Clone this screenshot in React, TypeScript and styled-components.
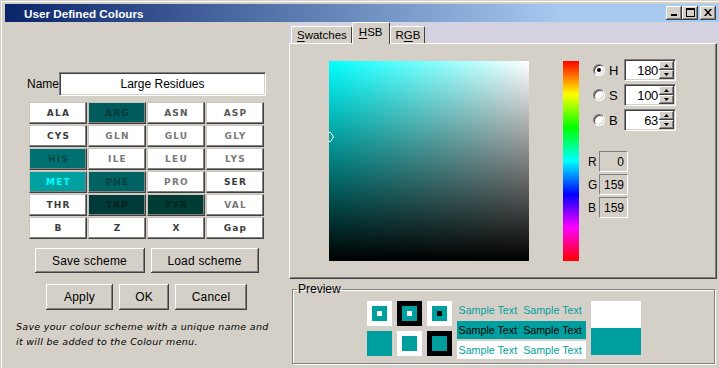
import React from 'react'
import styled, { createGlobalStyle } from 'styled-components'

const TEAL = '#009f9f'

const GlobalStyle = createGlobalStyle`
  html, body {
    margin: 0;
    padding: 0;
    background: #d4d0c8;
  }
  body {
    width: 719px;
    height: 368px;
    overflow: hidden;
    font-family: 'Liberation Sans', Arial, sans-serif;
  }
`

const residues = [
  { name: 'ALA', bg: '#fff', fg: '#3c3c3c' },
  { name: 'ARG', bg: '#005c5c', fg: '#003a3a' },
  { name: 'ASN', bg: '#fff', fg: '#5a5a5a' },
  { name: 'ASP', bg: '#fff', fg: '#5a5a5a' },
  { name: 'CYS', bg: '#fff', fg: '#3c3c3c' },
  { name: 'GLN', bg: '#fff', fg: '#7a7a7a' },
  { name: 'GLU', bg: '#fff', fg: '#7a7a7a' },
  { name: 'GLY', bg: '#fff', fg: '#7a7a7a' },
  { name: 'HIS', bg: '#007070', fg: '#004848' },
  { name: 'ILE', bg: '#fff', fg: '#7a7a7a' },
  { name: 'LEU', bg: '#fff', fg: '#7a7a7a' },
  { name: 'LYS', bg: '#fff', fg: '#7a7a7a' },
  { name: 'MET', bg: '#00a0a0', fg: '#00ffff' },
  { name: 'PHE', bg: '#006262', fg: '#003e3e' },
  { name: 'PRO', bg: '#fff', fg: '#7a7a7a' },
  { name: 'SER', bg: '#fff', fg: '#3c3c3c' },
  { name: 'THR', bg: '#fff', fg: '#3c3c3c' },
  { name: 'TRP', bg: '#003a3a', fg: '#002020' },
  { name: 'TYR', bg: '#003c34', fg: '#00241e' },
  { name: 'VAL', bg: '#fff', fg: '#7a7a7a' },
  { name: 'B', bg: '#fff', fg: '#3c3c3c' },
  { name: 'Z', bg: '#fff', fg: '#3c3c3c' },
  { name: 'X', bg: '#fff', fg: '#3c3c3c' },
  { name: 'Gap', bg: '#fff', fg: '#3c3c3c' },
]

function App() {
  return (
    <>
      <GlobalStyle />
      <Window>
        <TitleBar>
          <Title>User Defined Colours</Title>
          <CaptionButtons>
            <CaptionButton>
              <svg width="8" height="7">
                <rect x="1" y="5" width="6" height="2" fill="#000" />
              </svg>
            </CaptionButton>
            <CaptionButton>
              <svg width="9" height="9">
                <rect x="0.5" y="0.5" width="8" height="8" fill="none" stroke="#000" />
                <rect x="0" y="1" width="9" height="1" fill="#000" />
              </svg>
            </CaptionButton>
            <CaptionButton $gap>
              <svg width="8" height="7">
                <path d="M0 0h2l2 2.4L6 0h2L5 3.5 8 7H6L4 4.6 2 7H0l3-3.5z" fill="#000" />
              </svg>
            </CaptionButton>
          </CaptionButtons>
        </TitleBar>

        <Body>
          <LeftPanel>
            <NameRow>
              <NameLabel>Name</NameLabel>
              <NameField>Large Residues</NameField>
            </NameRow>
            <CellGrid>
              {residues.map((r) => (
                <Cell key={r.name} $bg={r.bg} $fg={r.fg}>
                  {r.name}
                </Cell>
              ))}
            </CellGrid>
            <ButtonRow $top={9}>
              <Button $w={110} $h={25}>Save scheme</Button>
              <Button $w={108} $h={25}>Load scheme</Button>
            </ButtonRow>
            <ButtonRow $top={11}>
              <Button $w={67} $h={26}>Apply</Button>
              <Button $w={50} $h={26}>OK</Button>
              <Button $w={72} $h={26}>Cancel</Button>
            </ButtonRow>
            <Note>
              Save your colour scheme with a unique name and
              <br />
              it will be added to the Colour menu.
            </Note>
          </LeftPanel>

          <RightPanel>
            <TabStrip>
              <Tab>
                <u>S</u>watches
              </Tab>
              <Tab $active>
                <u>H</u>SB
              </Tab>
              <Tab>
                R<u>G</u>B
              </Tab>
            </TabStrip>
            <TabPanel>
              <ColorSquare>
                <Marker width="6" height="10">
                  <path d="M0.5 0.5H2.5L5.5 5L2.5 9.5H0.5" fill="none" stroke="#fff" />
                </Marker>
              </ColorSquare>
              <HueBar />
              <Controls>
                {[
                  { label: 'H', value: '180', on: true },
                  { label: 'S', value: '100', on: false },
                  { label: 'B', value: '63', on: false },
                ].map((c) => (
                  <HsbRow key={c.label}>
                    <Radio $on={c.on} />
                    <ControlLabel>{c.label}</ControlLabel>
                    <SpinField>
                      <SpinValue>{c.value}</SpinValue>
                      <SpinButtons>
                        <SpinButton>
                          <svg width="5" height="3">
                            <path d="M2.5 0L5 3H0z" fill="#000" />
                          </svg>
                        </SpinButton>
                        <SpinButton>
                          <svg width="5" height="3">
                            <path d="M0 0H5L2.5 3z" fill="#000" />
                          </svg>
                        </SpinButton>
                      </SpinButtons>
                    </SpinField>
                  </HsbRow>
                ))}
                <RgbList>
                  {[
                    ['R', '0'],
                    ['G', '159'],
                    ['B', '159'],
                  ].map(([l, v]) => (
                    <RgbRow key={l}>
                      <RgbLabel>{l}</RgbLabel>
                      <RgbField>{v}</RgbField>
                    </RgbRow>
                  ))}
                </RgbList>
              </Controls>
            </TabPanel>

            <PreviewGroup>
              <Legend>Preview</Legend>
              <PreviewContent>
                <SquareGrid>
                  <Frame $s={25} $c="#fff">
                    <Frame $s={15} $c={TEAL}>
                      <Frame $s={5} $c="#fff" />
                    </Frame>
                  </Frame>
                  <Frame $s={25} $c="#000">
                    <Frame $s={15} $c={TEAL}>
                      <Frame $s={5} $c="#fff" />
                    </Frame>
                  </Frame>
                  <Frame $s={25} $c="#fff">
                    <Frame $s={15} $c={TEAL}>
                      <Frame $s={5} $c="#000" />
                    </Frame>
                  </Frame>
                  <Frame $s={25} $c={TEAL} />
                  <Frame $s={25} $c="#fff">
                    <Frame $s={15} $c={TEAL} />
                  </Frame>
                  <Frame $s={25} $c="#000">
                    <Frame $s={15} $c={TEAL} />
                  </Frame>
                </SquareGrid>
                <Samples>
                  <SampleRow $bg="transparent" $fg={TEAL}>
                    <span>Sample Text</span>
                    <span>Sample Text</span>
                  </SampleRow>
                  <SampleRow $bg={TEAL} $fg="#000">
                    <span>Sample Text</span>
                    <span>Sample Text</span>
                  </SampleRow>
                  <SampleRow $bg="#fff" $fg={TEAL}>
                    <span>Sample Text</span>
                    <span>Sample Text</span>
                  </SampleRow>
                </Samples>
                <BigSwatch>
                  <SwatchHalf $c="#fff" />
                  <SwatchHalf $c={TEAL} />
                </BigSwatch>
              </PreviewContent>
            </PreviewGroup>
          </RightPanel>
        </Body>
      </Window>
    </>
  )
}

const Window = styled.div`
  width: 719px;
  height: 368px;
  box-sizing: border-box;
  padding: 4px 0 0 5px;
  background: #d4d0c8;
  box-shadow: inset 1px 1px 0 #d4d0c8, inset 2px 2px 0 #fff;
  display: flex;
  flex-direction: column;
`

const TitleBar = styled.div`
  height: 18px;
  display: flex;
  align-items: center;
  padding: 0 3px 0 19px;
  background: linear-gradient(to right, #0a246a 0%, #a6caf0 78%, #a6caf0 100%);
`

const Title = styled.div`
  color: #fff;
  font-weight: bold;
  font-size: 11.7px;
`

const CaptionButtons = styled.div`
  margin-left: auto;
  display: flex;
`

const CaptionButton = styled.div<{ $gap?: boolean }>`
  width: 16px;
  height: 14px;
  margin-left: ${(p) => (p.$gap ? '2px' : '0')};
  background: #d4d0c8;
  box-shadow: inset -1px -1px 0 #404040, inset 1px 1px 0 #fff, inset -2px -2px 0 #808080;
  display: flex;
  align-items: center;
  justify-content: center;
  padding-bottom: 1px;
  box-sizing: border-box;
`

const Body = styled.div`
  flex: 1;
  display: flex;
`

const LeftPanel = styled.div`
  width: 283px;
  display: flex;
  flex-direction: column;
  align-items: center;
  padding-top: 50px;
  box-sizing: border-box;
`

const NameRow = styled.div`
  width: 239px;
  height: 24px;
  display: flex;
  align-items: center;
`

const NameLabel = styled.div`
  width: 32px;
  font-size: 12px;
  color: #000;
`

const sunken = `
  border: 1px solid;
  border-color: #808080 #fff #fff #808080;
  box-shadow: inset 1px 1px 0 #404040, inset -1px -1px 0 #d4d0c8;
  box-sizing: border-box;
`

const NameField = styled.div`
  flex: 1;
  height: 24px;
  ${sunken}
  background: #fff;
  display: flex;
  align-items: center;
  justify-content: center;
  font-size: 12px;
  color: #000;
`

const CellGrid = styled.div`
  margin-top: 6px;
  display: grid;
  grid-template-columns: repeat(4, 58px);
  grid-auto-rows: 22px;
  gap: 1px;
`

const Cell = styled.div<{ $bg: string; $fg: string }>`
  background: ${(p) => p.$bg};
  color: ${(p) => p.$fg};
  border: 1px solid;
  border-color: #c8c4bc #404040 #404040 #c8c4bc;
  box-shadow: inset -1px -1px 0 #808080;
  box-sizing: border-box;
  display: flex;
  align-items: center;
  justify-content: center;
  font-family: 'DejaVu Sans', Verdana, sans-serif;
  font-weight: bold;
  font-size: 9px;
  letter-spacing: 1.2px;
  padding-left: 1px;
`

const ButtonRow = styled.div<{ $top: number }>`
  margin-top: ${(p) => p.$top}px;
  display: flex;
  gap: 6px;
`

const Button = styled.div<{ $w: number; $h: number }>`
  width: ${(p) => p.$w}px;
  height: ${(p) => p.$h}px;
  background: #d4d0c8;
  box-shadow: inset -1px -1px 0 #404040, inset 1px 1px 0 #fff, inset -2px -2px 0 #808080;
  display: flex;
  align-items: center;
  justify-content: center;
  font-size: 12px;
  letter-spacing: 0.2px;
  color: #000;
`

const Note = styled.div`
  align-self: flex-start;
  margin: 9px 0 0 11px;
  font-family: 'DejaVu Sans', Verdana, sans-serif;
  font-style: italic;
  font-size: 9.5px;
  line-height: 15px;
  letter-spacing: 0.3px;
  color: #000;
  white-space: nowrap;
`

const RightPanel = styled.div`
  flex: 1;
  display: flex;
  flex-direction: column;
`

const TabStrip = styled.div`
  height: 21px;
  margin-left: 1px;
  padding-left: 2px;
  background: #d4d1e0;
  display: flex;
  align-items: flex-end;
`

const Tab = styled.div<{ $active?: boolean }>`
  height: ${(p) => (p.$active ? 22 : 17)}px;
  margin-bottom: ${(p) => (p.$active ? -1 : 0)}px;
  padding: ${(p) => (p.$active ? '3px 6px 0 6px' : '2px 4px 0 5px')};
  box-sizing: border-box;
  background: #d4d0c8;
  border: 1px solid;
  border-bottom: none;
  border-color: #fff #404040 transparent #fff;
  border-radius: 2px 2px 0 0;
  position: relative;
  z-index: ${(p) => (p.$active ? 1 : 0)};
  font-size: 11.5px;
  color: #000;
  u {
    text-decoration-thickness: 1px;
    text-underline-offset: 2px;
  }
`

const TabPanel = styled.div`
  margin-left: 1px;
  width: 428px;
  height: 236px;
  box-sizing: border-box;
  border: 1px solid;
  border-color: #fff #404040 #404040 #fff;
  box-shadow: inset -1px -1px 0 #808080;
  display: flex;
  align-items: flex-start;
  padding: 15px 0 0 39px;
`

const ColorSquare = styled.div`
  position: relative;
  width: 200px;
  height: 200px;
  margin-top: 2px;
  background: linear-gradient(to top, #000, rgba(0, 0, 0, 0)),
    linear-gradient(to right, #0ff, #fff);
`

const Marker = styled.svg`
  position: absolute;
  left: -1px;
  top: 71px;
`

const HueBar = styled.div`
  width: 16px;
  height: 200px;
  margin: 2px 0 0 34px;
  background: linear-gradient(
    to bottom,
    #f00 0%,
    #ff0 16.67%,
    #0f0 33.33%,
    #0ff 50%,
    #00f 66.67%,
    #f0f 83.33%,
    #f00 100%
  );
`

const Controls = styled.div`
  margin-left: 9px;
  display: flex;
  flex-direction: column;
  gap: 3px;
`

const HsbRow = styled.div`
  height: 22px;
  display: flex;
  align-items: center;
  padding-left: 5px;
`

const Radio = styled.div<{ $on: boolean }>`
  width: 12px;
  height: 12px;
  box-sizing: border-box;
  border-radius: 50%;
  border: 1px solid;
  border-color: #808080 #fff #fff #808080;
  background: #fff;
  box-shadow: inset 1px 1px 0 #404040, inset -1px -1px 0 #d4d0c8;
  display: flex;
  align-items: center;
  justify-content: center;
  &::after {
    content: '';
    width: 4px;
    height: 4px;
    border-radius: 50%;
    background: ${(p) => (p.$on ? '#000' : 'transparent')};
  }
`

const ControlLabel = styled.div`
  width: 15px;
  margin-left: 4px;
  font-size: 13px;
  color: #000;
`

const SpinField = styled.div`
  width: 52px;
  height: 22px;
  ${sunken}
  background: #fff;
  display: flex;
  padding: 1px;
`

const SpinValue = styled.div`
  flex: 1;
  display: flex;
  align-items: center;
  justify-content: flex-end;
  padding-right: 1px;
  font-size: 13px;
  letter-spacing: -0.3px;
  color: #000;
`

const SpinButtons = styled.div`
  width: 15px;
  display: flex;
  flex-direction: column;
`

const SpinButton = styled.div`
  flex: 1;
  background: #d4d0c8;
  box-shadow: inset -1px -1px 0 #404040, inset 1px 1px 0 #fff, inset -2px -2px 0 #808080;
  display: flex;
  align-items: center;
  justify-content: center;
`

const RgbList = styled.div`
  margin-top: 17px;
  display: flex;
  flex-direction: column;
  gap: 2px;
`

const RgbRow = styled.div`
  display: flex;
  align-items: center;
`

const RgbLabel = styled.div`
  width: 11px;
  font-size: 12px;
  color: #000;
`

const RgbField = styled.div`
  width: 29px;
  height: 21px;
  box-sizing: border-box;
  border: 1px solid;
  border-color: #808080 #fff #fff #808080;
  background: #d4d0c8;
  display: flex;
  align-items: center;
  justify-content: flex-end;
  padding-right: 3px;
  font-size: 12px;
  color: #000;
`

const PreviewGroup = styled.fieldset`
  margin: 4px 0 0 4px;
  width: 423px;
  height: 81px;
  box-sizing: border-box;
  padding: 0;
  border: 1px solid #808080;
  box-shadow: 1px 1px 0 #fff, inset 1px 1px 0 #fff;
`

const Legend = styled.legend`
  margin-left: 4px;
  padding: 0 1px;
  font-size: 12px;
  line-height: 12px;
  color: #000;
`

const PreviewContent = styled.div`
  display: flex;
  justify-content: center;
  gap: 5px;
  margin-top: 6px;
`

const SquareGrid = styled.div`
  display: grid;
  grid-template-columns: repeat(3, 25px);
  grid-auto-rows: 25px;
  gap: 5px;
`

const Frame = styled.div<{ $s: number; $c: string }>`
  width: ${(p) => p.$s}px;
  height: ${(p) => p.$s}px;
  background: ${(p) => p.$c};
  display: flex;
  align-items: center;
  justify-content: center;
`

const Samples = styled.div`
  width: 129px;
  display: flex;
  flex-direction: column;
  gap: 2px;
`

const SampleRow = styled.div<{ $bg: string; $fg: string }>`
  height: 18px;
  background: ${(p) => p.$bg};
  color: ${(p) => p.$fg};
  display: flex;
  align-items: center;
  gap: 6px;
  padding-left: 2px;
  font-size: 10.7px;
  white-space: nowrap;
  overflow: hidden;
`

const BigSwatch = styled.div`
  width: 50px;
  display: flex;
  flex-direction: column;
`

const SwatchHalf = styled.div<{ $c: string }>`
  height: 27px;
  background: ${(p) => p.$c};
`

export default App
